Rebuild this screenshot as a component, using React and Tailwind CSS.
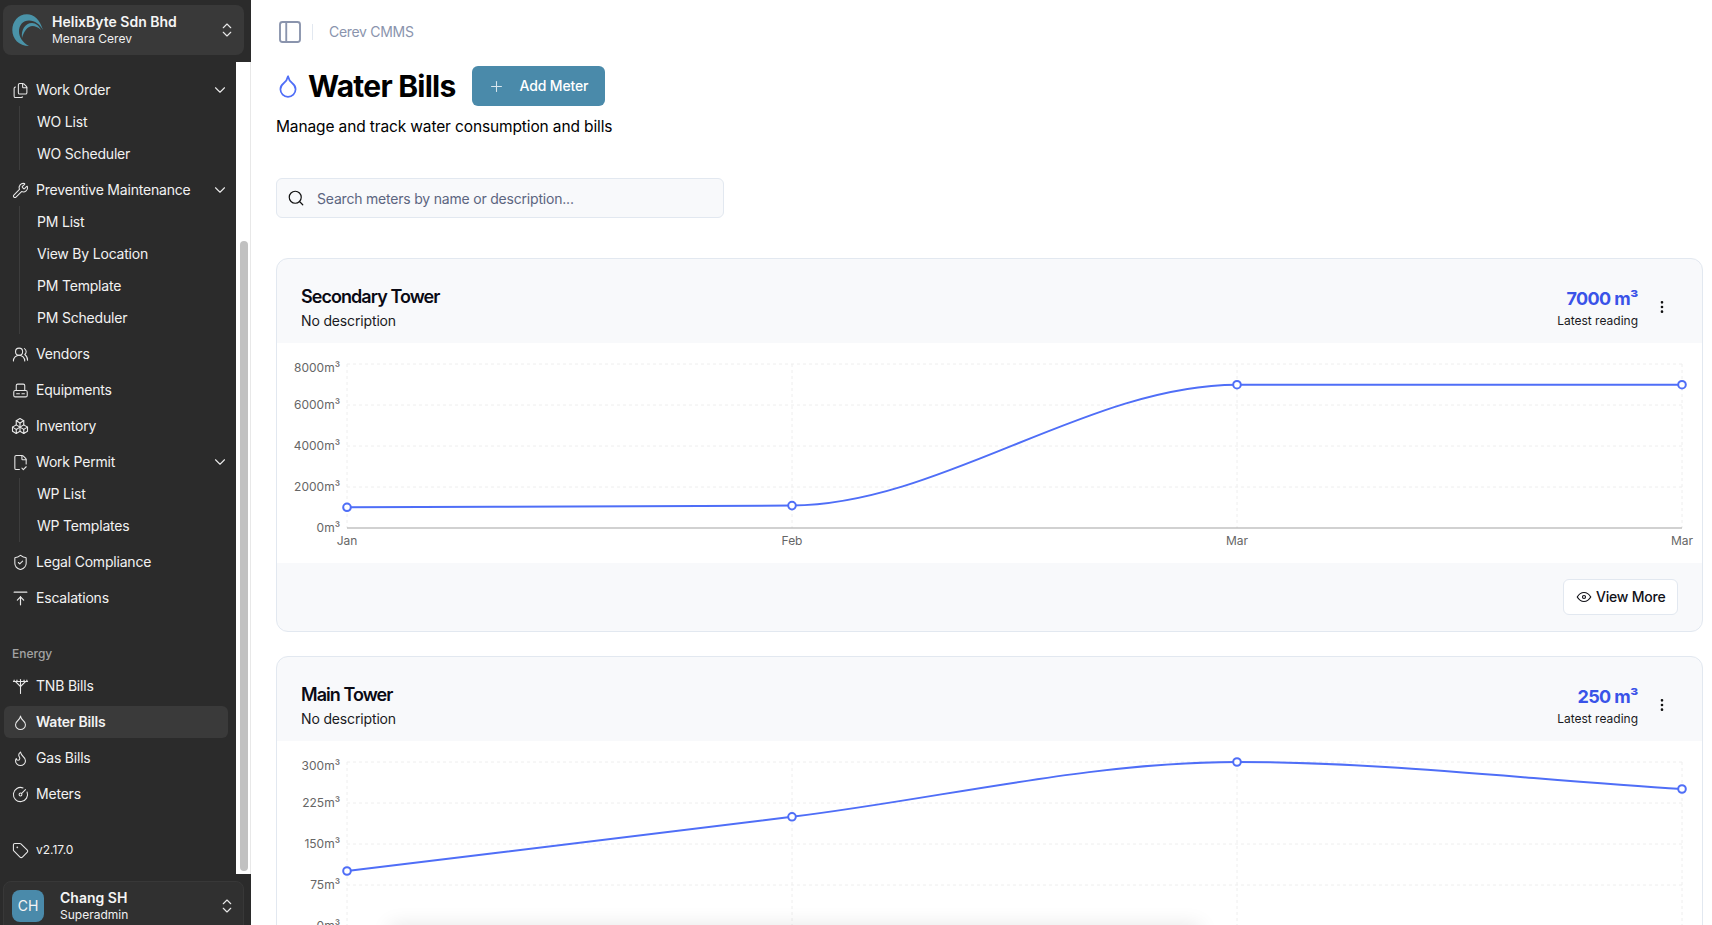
import {
  TbPackages, TbArrowBarToUp, TbPlus, TbDotsVertical, TbEye, TbLayoutSidebar,
} from 'react-icons/tb'
import {
  Files, Wrench, UsersRound, ShieldCheck, CircleGauge, Tag, ChevronDown, ChevronsUpDown, FileCheck2, Search,
  UtilityPole, Droplet, Flame,
} from 'lucide-react'

const font = { fontFamily: 'Inter, sans-serif' }

function EquipmentIcon({ size, strokeWidth, className }) {
  return (
    <svg width={size} height={size} viewBox="0 0 24 24" fill="none" stroke="currentColor" strokeWidth={strokeWidth} strokeLinecap="round" strokeLinejoin="round" className={className}>
      <path d="M6 12V5a2 2 0 0 1 2-2h8a2 2 0 0 1 2 2v7" />
      <rect x="2.5" y="12" width="19" height="9" rx="2" />
      <path d="M6.5 16.5h4M14 16.5h3.5" />
    </svg>
  )
}

function NavItem({ icon: Icon, label, chevron, active, size = 17, small }) {
  return (
    <div className={`flex items-center h-8 shrink-0 rounded-md pl-2 ${active ? 'bg-[#3a3a3a] font-semibold' : ''}`}>
      <span className="w-4 h-4 flex items-center justify-center shrink-0">
        <Icon size={size} strokeWidth={1.5} className="shrink-0 text-[#e8e8e8]" />
      </span>
      <span className={`ml-2 text-[#f2f2f2] ${small ? 'text-xs' : 'text-sm tracking-[-0.2px]'}`}>{label}</span>
      {chevron && <ChevronDown size={18} strokeWidth={1.5} className="ml-auto mr-[-1px] text-[#e8e8e8]" />}
    </div>
  )
}

function SubList({ items }) {
  return (
    <div className="ml-[15px] shrink-0 border-l border-[#3d3d3d] pl-[17px] py-0.5 flex flex-col gap-1">
      {items.map(t => (
        <div key={t} className="h-7 flex items-center text-sm tracking-[-0.2px] text-[#f2f2f2]">{t}</div>
      ))}
    </div>
  )
}

function Sidebar() {
  return (
    <aside className="w-[251px] shrink-0 h-[925px] bg-[#2b2b2b] flex flex-col overflow-hidden">
      <div className="h-[62px] shrink-0 pt-[5px] pl-[3px] pr-[7px]">
        <div className="h-[50px] rounded-lg bg-[#393939] flex items-center pl-[9px] pr-2">
          <svg width="32" height="33" viewBox="0 0 32 33" className="shrink-0">
            <path d="M31 16C28 6 22 .3 15 .3 6 .3.3 8 .3 16c0 9 6.700 16 16.700 16C11 29 7 23 7 17.500 7 11 11 6.500 17 6.500c6 0 11 4 14 9.500Z" fill="#4a93a8" />
            <path d="M10 24C9 16 13 9 20 9c4 0 7 3 9 7-3-3-6-4-8.500-4C15.500 12 12 17 10 24Z" fill="#4a93a8" />
          </svg>
          <div className="ml-2 flex flex-col min-w-0">
            <span className="text-sm font-semibold text-[#f5f5f5] leading-[18px]">HelixByte Sdn Bhd</span>
            <span className="text-xs text-[#f0f0f0] leading-4">Menara Cerev</span>
          </div>
          <ChevronsUpDown size={18} strokeWidth={1.5} className="ml-auto text-[#e8e8e8]" />
        </div>
      </div>
      <div className="flex-1 min-h-0 flex">
        <div className="w-[236px] shrink-0 pl-[4px] pr-[8px] pt-[12px] flex flex-col">
          <NavItem icon={Files} label="Work Order" chevron />
          <SubList items={['WO List', 'WO Scheduler']} />
          <div className="h-1 shrink-0" />
          <NavItem icon={Wrench} label="Preventive Maintenance" chevron />
          <SubList items={['PM List', 'View By Location', 'PM Template', 'PM Scheduler']} />
          <div className="h-1 shrink-0" />
          <div className="flex flex-col gap-1 shrink-0">
            <NavItem icon={UsersRound} label="Vendors" />
            <NavItem icon={EquipmentIcon} label="Equipments" />
            <NavItem icon={TbPackages} size={18} label="Inventory" />
            <NavItem icon={FileCheck2} label="Work Permit" chevron />
          </div>
          <SubList items={['WP List', 'WP Templates']} />
          <div className="h-1 shrink-0" />
          <div className="flex flex-col gap-1 shrink-0">
            <NavItem icon={ShieldCheck} label="Legal Compliance" />
            <NavItem icon={TbArrowBarToUp} size={19} label="Escalations" />
          </div>
          <div className="h-[56px] shrink-0 pt-[32px] pl-2 text-xs font-medium text-[#a3a3a3] leading-4">Energy</div>
          <div className="flex flex-col gap-1 shrink-0">
            <NavItem icon={UtilityPole} label="TNB Bills" />
            <NavItem icon={Droplet} label="Water Bills" active />
            <NavItem icon={Flame} label="Gas Bills" />
            <NavItem icon={CircleGauge} label="Meters" />
          </div>
          <div className="mt-6 shrink-0">
            <NavItem icon={Tag} label="v2.17.0" small />
          </div>
        </div>
        <div className="w-[15px] h-[812px] bg-white border-r border-[#e8e8e8] pl-[4px] pt-[179px]">
          <div className="w-[8px] h-[630px] rounded-full bg-[#c1c1c1]" />
        </div>
      </div>
      <div className="h-[51px] shrink-0 pl-[3px] pr-[7px] pt-[7px]">
        <div className="h-[60px] rounded-lg bg-[#303030] border border-[#383838] flex items-start pt-[8px] pl-[8px] pr-[7px]">
          <div className="w-8 h-8 rounded-lg bg-[#4a8aaa] text-[#f5f5f5] text-sm flex items-center justify-center shrink-0">CH</div>
          <div className="ml-4 mt-[-1px] flex flex-col">
            <span className="text-sm font-semibold text-[#f5f5f5] leading-[18px]">Chang SH</span>
            <span className="text-xs text-[#f0f0f0] leading-4">Superadmin</span>
          </div>
          <ChevronsUpDown size={18} strokeWidth={1.5} className="ml-auto mt-[7px] text-[#e8e8e8]" />
        </div>
      </div>
    </aside>
  )
}

// monotone cubic path, same idea as the chart lib
function linePath(pts) {
  const n = pts.length
  const d = []
  const m = []
  for (let i = 0; i < n - 1; i++) d.push((pts[i + 1][1] - pts[i][1]) / (pts[i + 1][0] - pts[i][0]))
  m[0] = d[0]
  for (let i = 1; i < n - 1; i++) m[i] = d[i - 1] * d[i] <= 0 ? 0 : (2 * d[i - 1] * d[i]) / (d[i - 1] + d[i])
  m[n - 1] = d[n - 2]
  let s = `M${pts[0][0]},${pts[0][1]}`
  for (let i = 0; i < n - 1; i++) {
    const h = (pts[i + 1][0] - pts[i][0]) / 3
    s += `C${pts[i][0] + h},${pts[i][1] + m[i] * h} ${pts[i + 1][0] - h},${pts[i + 1][1] - m[i + 1] * h} ${pts[i + 1][0]},${pts[i + 1][1]}`
  }
  return s
}

function Chart({ ticks, ys }) {
  const xs = [70, 515, 960, 1405]
  const labels = ['Jan', 'Feb', 'Mar', 'Mar']
  const rows = [21, 62, 103, 144, 185]
  const pts = xs.map((x, i) => [x, ys[i]])
  return (
    <svg width="1425" height="220" className="block">
      {rows.slice(0, 4).map(y => (
        <line key={y} x1="70" x2="1405" y1={y} y2={y} stroke="#eeeeee" strokeDasharray="3 3" />
      ))}
      {xs.map(x => (
        <line key={x} x1={x} x2={x} y1="21" y2="185" stroke="#eeeeee" strokeDasharray="3 3" />
      ))}
      <line x1="70" x2="1405" y1="185" y2="185" stroke="#a3a3a3" />
      {ticks.map((t, i) => (
        <text key={i} x="63" y={rows[i] + (i === 0 ? 8 : 4)} textAnchor="end" fontSize="12" fill="#666666" style={font}>{t}m³</text>
      ))}
      {labels.map((t, i) => (
        <text key={i} x={xs[i]} y="202" textAnchor="middle" fontSize="12" fill="#666666" style={font}>{t}</text>
      ))}
      <path d={linePath(pts)} fill="none" stroke="#4f6ef7" strokeWidth="2" />
      {pts.map(([x, y]) => (
        <circle key={x} cx={x} cy={y} r="3.8" fill="#ffffff" stroke="#4f6ef7" strokeWidth="2" />
      ))}
    </svg>
  )
}

function MeterCard({ name, reading, ticks, ys }) {
  return (
    <div className="shrink-0 w-[1427px] rounded-xl border border-[#e2e8f0] bg-[#f8f9fb] overflow-hidden">
      <div className="h-[84px] flex items-start pl-6 pr-8 pt-6">
        <div className="flex flex-col mt-[2px]">
          <span className="text-lg font-semibold text-[#0a0a14] leading-6 tracking-[-0.95px]">{name}</span>
          <span className="text-sm text-[#1a1a22] leading-5 mt-[2px] tracking-[-0.15px]">No description</span>
        </div>
        <div className="ml-auto flex flex-col items-end">
          <span className="text-lg font-bold text-[#3a53e8] leading-7 mt-[2px] tracking-[-0.6px]">{reading} m³</span>
          <span className="text-xs text-[#1a1a22] leading-4">Latest reading</span>
        </div>
        <TbDotsVertical size={16} className="ml-4 mt-4 text-[#111111]" />
      </div>
      <div className="bg-white h-[220px]">
        <Chart ticks={ticks} ys={ys} />
      </div>
      <div className="h-[68px] flex items-start justify-end pr-6 pt-4">
        <div className="h-9 w-[115px] pl-[11px] rounded-md border border-[#e2e8f0] bg-white flex items-center gap-[3px] text-sm font-medium tracking-[-0.2px] text-[#111118]">
          <TbEye size={18} strokeWidth={1.6} />
          <span>View More</span>
        </div>
      </div>
    </div>
  )
}

export default function App() {
  return (
    <div className="relative flex w-[1712px] h-[925px] overflow-hidden bg-white" style={font}>
      <Sidebar />
      <main className="flex-1 min-w-0 pl-[25px] overflow-hidden flex flex-col">
        <div className="h-[64px] shrink-0 flex items-center">
          <TbLayoutSidebar size={30} strokeWidth={1.5} className="ml-[-1px] text-[#8a94ad]" />
          <div className="ml-[7px] w-px h-4 bg-[#e2e8f0]" />
          <span className="ml-4 text-sm tracking-[-0.3px] text-[#8a94ad]">Cerev CMMS</span>
        </div>
        <div className="flex items-center h-[44px] shrink-0">
          <Droplet size={26} strokeWidth={1.6} className="text-[#4f6ef7] ml-[-1px]" />
          <h1 className="ml-[7px] text-3xl font-bold text-black tracking-[-0.75px]">Water Bills</h1>
          <div className="ml-4 h-10 w-[133px] rounded-md bg-[#4a8aaa] flex items-center pl-4 text-sm font-medium tracking-[-0.15px] text-white">
            <TbPlus size={17} strokeWidth={1.5} className="text-[#d8e6ee]" />
            <span className="ml-[15px]">Add Meter</span>
          </div>
        </div>
        <p className="text-[15.5px] tracking-[-0.13px] text-black leading-6 mt-[7px] shrink-0">Manage and track water consumption and bills</p>
        <div className="mt-[39px] w-[448px] h-10 shrink-0 rounded-md border border-[#e2e8f0] bg-[#f8f9fb] flex items-center pl-[10px] text-sm tracking-[-0.2px] text-[#5c6580]">
          <Search size={18} strokeWidth={1.6} className="text-[#111111]" />
          <span className="ml-3 mt-px">Search meters by name or description...</span>
        </div>
        <div className="mt-10 flex flex-col gap-6 shrink-0">
          <MeterCard name="Secondary Tower" reading="7000" ticks={['8000', '6000', '4000', '2000', '0']} ys={[164.3, 162.6, 41.7, 41.7]} />
          <MeterCard name="Main Tower" reading="250" ticks={['300', '225', '150', '75', '0']} ys={[130, 75.8, 21, 48]} />
        </div>
      </main>
      {/* shadow of something sitting just under the fold */}
      <div className="absolute left-[390px] bottom-[-20px] w-[810px] h-5 shadow-[0_0_20px_rgba(0,0,0,0.1)]" />
    </div>
  )
}
